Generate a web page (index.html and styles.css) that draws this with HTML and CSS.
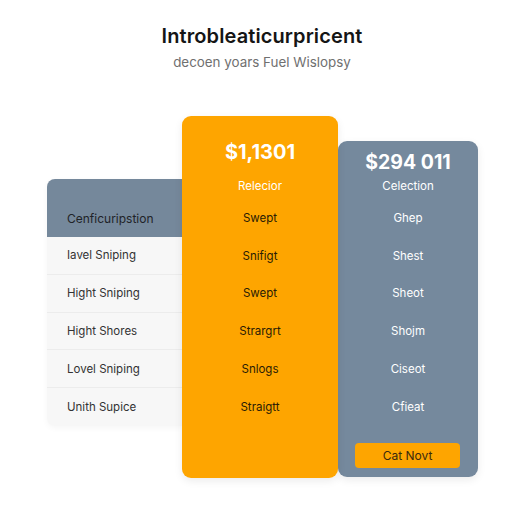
FILE: index.html
```html
<!DOCTYPE html>
<html>
<head>
<meta charset="utf-8">
<link rel="stylesheet" href="styles.css">
</head>
<body>
<header class="head">
  <h1 class="title">Introbleaticurpricent</h1>
  <p class="subtitle">decoen yoars Fuel Wislopsy</p>
</header>
<main class="pricing">
  <section class="features">
    <div class="features-head"><span>Cenficuripstion</span></div>
    <div class="row">Iavel Sniping</div>
    <div class="row">Hight Sniping</div>
    <div class="row">Hight Shores</div>
    <div class="row">Lovel Sniping</div>
    <div class="row last">Unith Supice</div>
  </section>
  <section class="plan plan-main">
    <div class="plan-top">
      <div class="price">$1,1301</div>
      <div class="label">Relecior</div>
    </div>
    <div class="cell">Swept</div>
    <div class="cell">Snifigt</div>
    <div class="cell">Swept</div>
    <div class="cell">Strargrt</div>
    <div class="cell">Snlogs</div>
    <div class="cell">Straigtt</div>
  </section>
  <section class="plan plan-alt">
    <div class="plan-top">
      <div class="price">$294 011</div>
      <div class="label">Celection</div>
    </div>
    <div class="cell">Ghep</div>
    <div class="cell">Shest</div>
    <div class="cell">Sheot</div>
    <div class="cell">Shojm</div>
    <div class="cell">Ciseot</div>
    <div class="cell">Cfieat</div>
    <div class="btn-wrap"><button class="btn">Cat Novt</button></div>
  </section>
</main>
</body>
</html>
```
FILE: styles.css
```css
* { box-sizing: border-box; }
html, body { margin: 0; padding: 0; background: #ffffff; }
body { font-family: "Inter", "Lato", sans-serif; color: #1d1d1f; width: 512px; height: 512px; overflow: hidden; }

.head { text-align: center; padding-top: 24px; padding-left: 12px; }
.title { margin: 0; font-size: 20px; font-weight: 600; line-height: 24px; color: #151515; letter-spacing: 0.1px; }
.subtitle { margin: 6px 0 0; font-size: 13.4px; line-height: 16px; color: #707070; }

.pricing { display: flex; align-items: flex-start; padding-left: 47px; margin-top: 46px; }

.features { width: 136px; margin-top: 63px; background: #f7f7f7; border-radius: 8px 0 0 8px; overflow: hidden; box-shadow: 0 2px 6px rgba(0,0,0,0.04); }
.features-head { height: 58px; background: #75889b; padding-top: 20px; }
.features-head span { display: flex; align-items: center; height: 38px; padding-left: 20px; font-size: 12px; color: #1f2328; }
.row { height: 37.8px; display: flex; align-items: center; padding-left: 20px; font-size: 11.5px; color: #333333; border-bottom: 1px solid #ececec; }
.row.last { border-bottom: none; }

.plan { display: flex; flex-direction: column; border-radius: 9px; text-align: center; }
.plan-main { width: 156px; height: 362px; background: #fea500; position: relative; z-index: 2; margin-left: -1px; box-shadow: 0 3px 8px rgba(0,0,0,0.08); }
.plan-main .plan-top { height: 83px; padding-top: 24px; }
.plan-alt { width: 140px; height: 336px; margin-top: 25px; background: #75899d; box-shadow: 0 3px 8px rgba(0,0,0,0.08); }
.plan-alt .plan-top { height: 58px; padding-top: 9px; }

.price { font-size: 20px; font-weight: 700; line-height: 24px; color: #ffffff; }
.plan-alt .price { font-size: 19.5px; }
.label { font-size: 11.5px; line-height: 14px; color: #ffffff; }
.plan-main .label { margin-top: 15px; }
.plan-alt .label { margin-top: 5px; }

.cell { height: 37.8px; display: flex; align-items: center; justify-content: center; font-size: 11.5px; }
.plan-main .cell { color: #2a1c05; }
.plan-alt .cell { color: #ffffff; }

.btn-wrap { padding: 17px 18px 0 17px; }
.btn { width: 105px; height: 25px; border: none; border-radius: 4px; background: #fea500; color: #3a2a0e; font-family: inherit; font-size: 12px; padding: 0; }
```
